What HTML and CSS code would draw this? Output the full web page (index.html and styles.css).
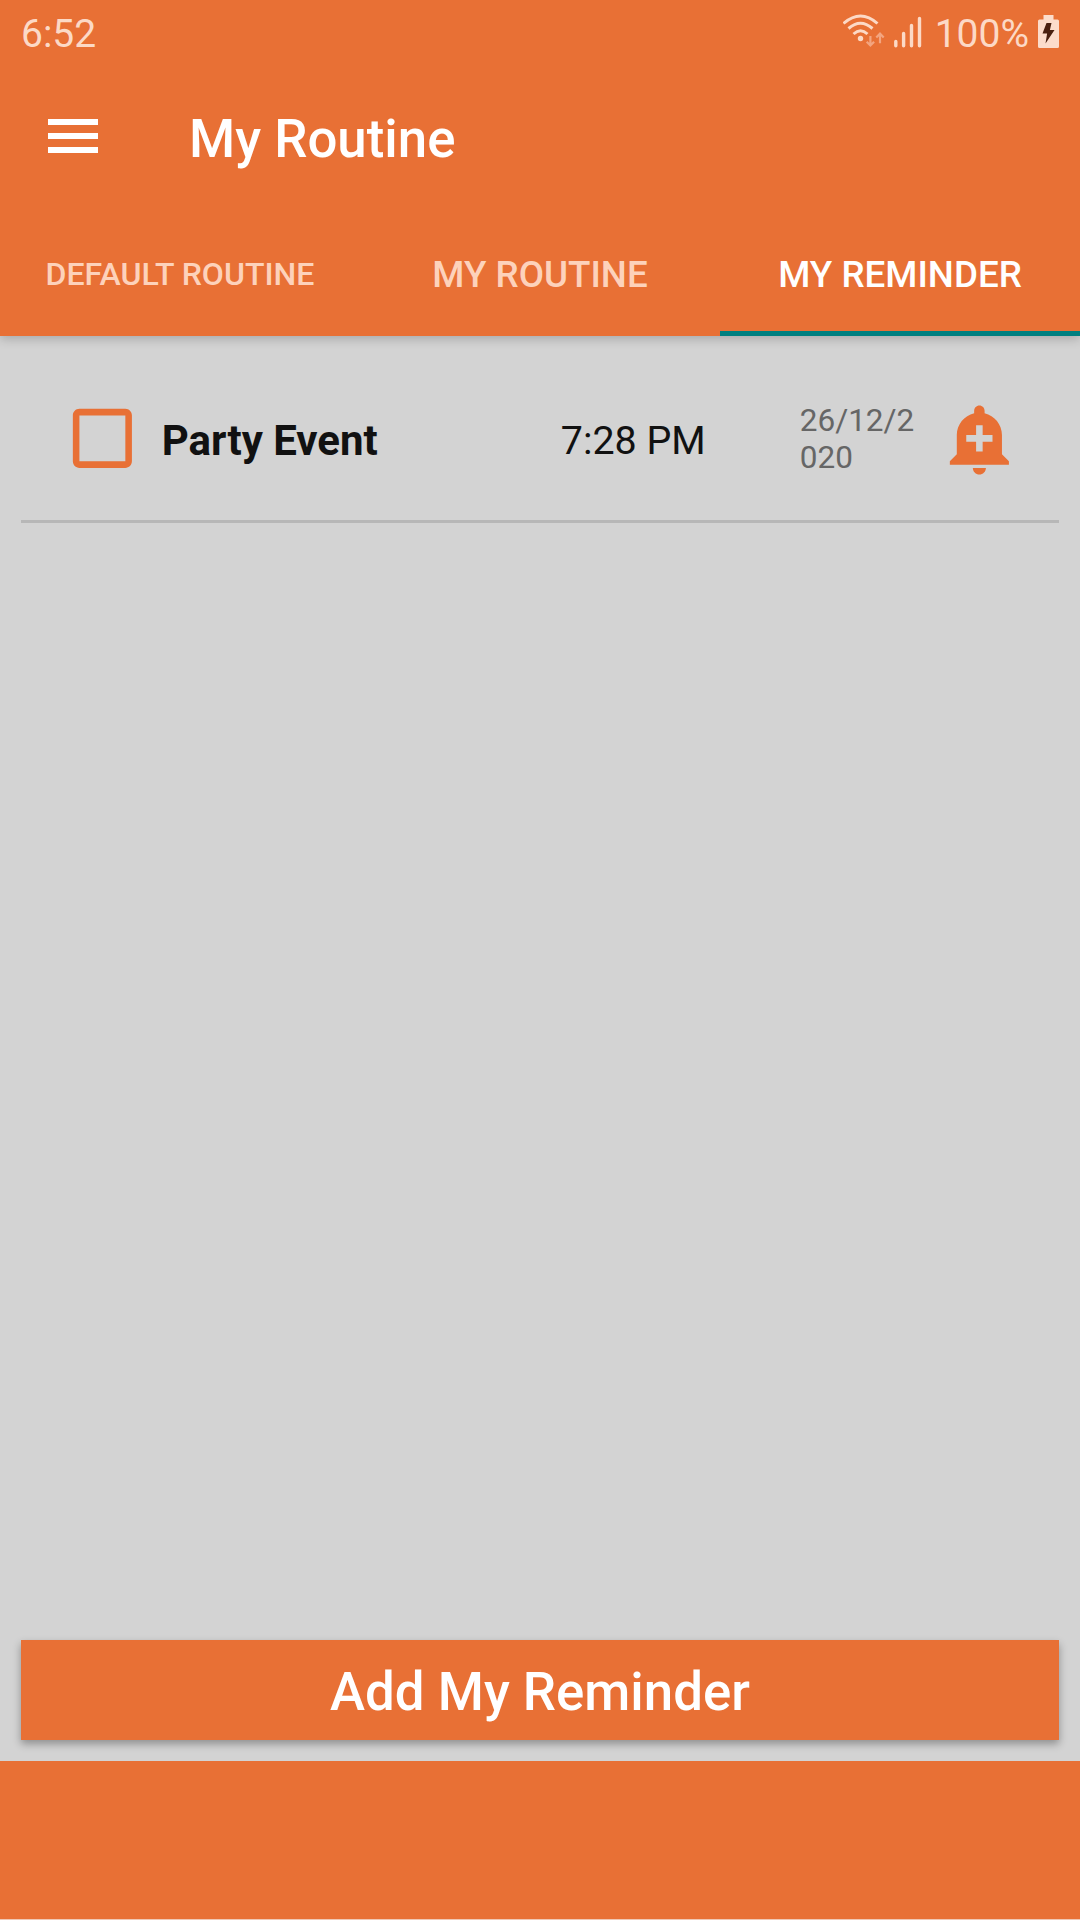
FILE: index.html
```
<!DOCTYPE html>
<html lang="en">
<head>
    <meta charset="UTF-8">
    <meta name="viewport" content="width=device-width, initial-scale=1.0">
    <title>My Routine</title>
    <link rel="stylesheet" href="styles.css">
</head>
<body>
    <header class="header">
        <div class="status-bar">
            <span class="clock">6:52</span>
            <div class="status-icons">
                <!-- wifi with data arrows -->
                <svg class="wifi" width="42" height="34" viewBox="0 0 42 34">
                    <g fill="none" stroke="#fcd9c6" stroke-width="3">
                        <path d="M0.500 9.500Q17.500 -5.500 34.500 9.500"/>
                        <path d="M5.500 14.500Q17.500 4 29.500 14.500"/>
                        <path d="M10.500 20Q17.500 13.500 24.500 20"/>
                    </g>
                    <circle cx="17.500" cy="24.500" r="2.700" fill="#fcd9c6"/>
                    <g fill="none" stroke="#f3a580" stroke-width="2.200">
                        <path d="M27.400 22v9.500M23.700 27.700l3.700 3.800 3.700-3.800"/>
                        <path d="M37 29.200v-9.500M33.300 23.500l3.700-3.800 3.700 3.800"/>
                    </g>
                </svg>
                <svg class="signal" width="28" height="32" viewBox="0 0 28 32">
                    <path d="M1.800 25.500v4.200M9.600 17.500v12.200M17.500 9.500v20.200M25.500 2.500v27.200" stroke="#fcd9c6" stroke-width="3.400" stroke-linecap="round"/>
                </svg>
                <span class="percent">100%</span>
                <svg class="battery" width="21" height="33" viewBox="0 0 21 33">
                    <path d="M5.500 0h10v4.500h4a1.500 1.500 0 0 1 1.500 1.500v25.500a1.500 1.500 0 0 1-1.500 1.500h-18a1.500 1.500 0 0 1-1.500-1.500v-25.500a1.500 1.500 0 0 1 1.500-1.500h4z" fill="#fcdccb"/>
                    <path d="M8.500 8h5l-1.600 7h4.600l-9 13.500 1.600-10h-4.600z" fill="#4a2010"/>
                </svg>
            </div>
        </div>

        <div class="toolbar">
            <button class="menu" aria-label="Menu"><span></span><span></span><span></span></button>
            <h1>My Routine</h1>
        </div>

        <nav class="tabs">
            <a href="#default" class="small">Default Routine</a>
            <a href="#routine">My Routine</a>
            <a href="#reminder" class="active">My Reminder</a>
        </nav>
    </header>

    <main class="content">
        <ul class="reminders">
            <li class="reminder">
                <svg class="icon" viewBox="0 0 24 24"><path d="M19 5v14H5V5h14m0-2H5c-1.100 0-2 .9-2 2v14c0 1.100.9 2 2 2h14c1.100 0 2-.9 2-2V5c0-1.100-.9-2-2-2z"/></svg>
                <span class="name">Party Event</span>
                <span class="time">7:28 PM</span>
                <span class="date">26/12/2020</span>
                <svg class="icon" viewBox="0 0 24 24"><path d="M10.010 21.010c0 1.100.89 1.990 1.990 1.990s1.990-.89 1.990-1.990h-3.980zm8.870-4.190V11c0-3.250-2.250-5.970-5.290-6.690v-.72C13.590 2.710 12.880 2 12 2s-1.590.71-1.590 1.590v.72C7.370 5.030 5.120 7.750 5.120 11v5.820L3 18.940V20h18v-1.060l-2.120-2.120zM16 13.010h-3v3h-2v-3H8V11h3V8h2v3h3v2.010z"/></svg>
            </li>
        </ul>
        <button class="add">Add My Reminder</button>
    </main>

    <footer class="footer"></footer>
</body>
</html>
```

FILE: styles.css
```
/* General styles */
* {
    box-sizing: border-box;
}

body {
    font-family: Roboto, "Liberation Sans", sans-serif;
    margin: 0;
    height: 1920px;
    display: flex;
    flex-direction: column;
    background-color: #d3d3d3;
    color: #111;
}

button {
    font-family: inherit;
    border: none;
    padding: 0;
}

/* Header */
.header {
    height: 336px;
    background-color: #e87035;
    color: white;
    box-shadow: 0 3px 10px rgba(0, 0, 0, 0.2);
}

.status-bar {
    height: 63px;
    padding: 4px 21px 0;
    display: flex;
    justify-content: space-between;
    align-items: center;
    font-size: 39px;
    color: #fcd9c6;
}

.status-icons {
    display: flex;
    align-items: center;
}

.wifi {
    margin: 0 9px 6px 0;
}

.signal {
    margin: 0 13px 4px 0;
}

.battery {
    margin: 0 0 4px 9px;
}

.toolbar {
    height: 147px;
    padding-left: 48px;
    display: flex;
    align-items: center;
}

.menu {
    width: 50px;
    margin-bottom: 1px;
    display: flex;
    flex-direction: column;
    gap: 8px;
    background: none;
}

.menu span {
    height: 6px;
    background-color: white;
}

.toolbar h1 {
    margin: 5px 0 0 91px;
    font-size: 52.8px;
    font-weight: 500;
}

.tabs {
    height: 126px;
    display: grid;
    grid-template-columns: repeat(3, 1fr);
}

.tabs a {
    padding-top: 7px;
    display: flex;
    justify-content: center;
    align-items: center;
    border-bottom: 5px solid transparent;
    color: #fdd2bb;
    font-size: 36.75px;
    font-weight: 500;
    text-decoration: none;
    text-transform: uppercase;
}

.tabs .small {
    font-size: 32.1px;
}

.tabs .active {
    color: white;
    border-bottom-color: #008080;
}

/* Reminder list */
.content {
    flex: 1;
    padding: 21px;
    display: flex;
    flex-direction: column;
    justify-content: space-between;
}

.reminders {
    margin: 0;
    padding: 0;
    list-style: none;
}

.reminder {
    height: 166px;
    padding: 0 40px 0 42px;
    display: flex;
    align-items: center;
    border-bottom: 3px solid #b7b7b7;
}

.icon {
    width: 78.75px;
    height: 78.75px;
    flex: none;
    fill: #e87035;
}

.name {
    width: 400px;
    padding: 4px 0 0 20px;
    font-size: 42px;
    font-weight: 700;
}

.time {
    width: 258px;
    padding: 4px 0 0 19px;
    font-size: 39.4px;
}

.date {
    width: 120px;
    margin-right: 20px;
    padding-top: 1px;
    color: #666;
    font-size: 31.5px;
    line-height: 37px;
    word-break: break-all;
}

.add {
    height: 100px;
    padding-top: 3px;
    background-color: #e87035;
    color: white;
    font-size: 52.8px;
    font-weight: 500;
    box-shadow: 0 4px 8px rgba(0, 0, 0, 0.32);
}

.footer {
    height: 159px;
    background-color: #e87035;
    border-bottom: 1px solid #f0c8b4;
}
```
